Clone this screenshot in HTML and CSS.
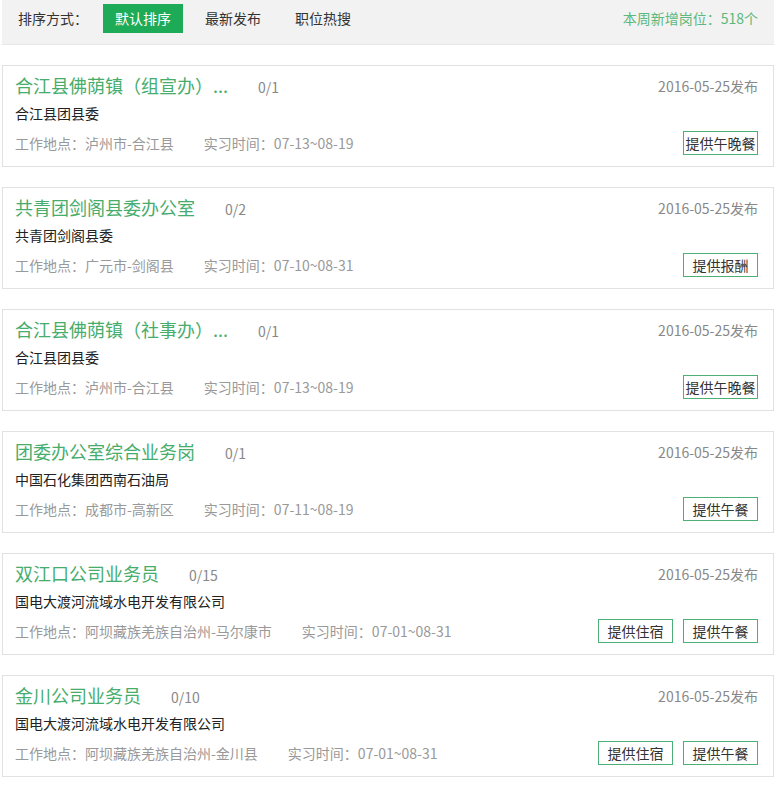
FILE: index.html
```html
<!doctype html>
<html lang="zh-CN">
<head>
    <meta charset="UTF-8">
    <meta name="viewport" content="width=device-width, initial-scale=1.0">
    <title>实习岗位</title>
    <link rel="stylesheet" href="styles.css">
</head>
<body>
    <div class="m-wrap">
        <div class="sort-bar">
            <div class="sort-left">
                <span class="sort-label">排序方式：</span>
                <a href="javascript:;" class="sort-item on">默认排序</a>
                <a href="javascript:;" class="sort-item">最新发布</a>
                <a href="javascript:;" class="sort-item">职位热搜</a>
            </div>
            <div class="sort-total">本周新增岗位：518个</div>
        </div>

        <div class="job">
            <div class="job-row job-head">
                <div class="job-title"><a href="javascript:;">合江县佛荫镇（组宣办）...</a><span class="job-count">0/1</span></div>
                <span class="job-date">2016-05-25发布</span>
            </div>
            <div class="job-org">合江县团县委</div>
            <div class="job-row job-meta">
                <div><span class="meta-place">工作地点：泸州市-合江县</span><span>实习时间：07-13~08-19</span></div>
                <div class="tags"><span class="tag">提供午晚餐</span></div>
            </div>
        </div>

        <div class="job">
            <div class="job-row job-head">
                <div class="job-title"><a href="javascript:;">共青团剑阁县委办公室</a><span class="job-count">0/2</span></div>
                <span class="job-date">2016-05-25发布</span>
            </div>
            <div class="job-org">共青团剑阁县委</div>
            <div class="job-row job-meta">
                <div><span class="meta-place">工作地点：广元市-剑阁县</span><span>实习时间：07-10~08-31</span></div>
                <div class="tags"><span class="tag">提供报酬</span></div>
            </div>
        </div>

        <div class="job">
            <div class="job-row job-head">
                <div class="job-title"><a href="javascript:;">合江县佛荫镇（社事办）...</a><span class="job-count">0/1</span></div>
                <span class="job-date">2016-05-25发布</span>
            </div>
            <div class="job-org">合江县团县委</div>
            <div class="job-row job-meta">
                <div><span class="meta-place">工作地点：泸州市-合江县</span><span>实习时间：07-13~08-19</span></div>
                <div class="tags"><span class="tag">提供午晚餐</span></div>
            </div>
        </div>

        <div class="job">
            <div class="job-row job-head">
                <div class="job-title"><a href="javascript:;">团委办公室综合业务岗</a><span class="job-count">0/1</span></div>
                <span class="job-date">2016-05-25发布</span>
            </div>
            <div class="job-org">中国石化集团西南石油局</div>
            <div class="job-row job-meta">
                <div><span class="meta-place">工作地点：成都市-高新区</span><span>实习时间：07-11~08-19</span></div>
                <div class="tags"><span class="tag">提供午餐</span></div>
            </div>
        </div>

        <div class="job">
            <div class="job-row job-head">
                <div class="job-title"><a href="javascript:;">双江口公司业务员</a><span class="job-count">0/15</span></div>
                <span class="job-date">2016-05-25发布</span>
            </div>
            <div class="job-org">国电大渡河流域水电开发有限公司</div>
            <div class="job-row job-meta">
                <div><span class="meta-place">工作地点：阿坝藏族羌族自治州-马尔康市</span><span>实习时间：07-01~08-31</span></div>
                <div class="tags"><span class="tag">提供住宿</span><span class="tag">提供午餐</span></div>
            </div>
        </div>

        <div class="job">
            <div class="job-row job-head">
                <div class="job-title"><a href="javascript:;">金川公司业务员</a><span class="job-count">0/10</span></div>
                <span class="job-date">2016-05-25发布</span>
            </div>
            <div class="job-org">国电大渡河流域水电开发有限公司</div>
            <div class="job-row job-meta">
                <div><span class="meta-place">工作地点：阿坝藏族羌族自治州-金川县</span><span>实习时间：07-01~08-31</span></div>
                <div class="tags"><span class="tag">提供住宿</span><span class="tag">提供午餐</span></div>
            </div>
        </div>
    </div>
</body>
</html>
```

FILE: styles.css
```css
*{
    margin: 0;
    padding: 0;
    box-sizing: border-box;
}
body{
    font-family: "Microsoft YaHei", "Noto Sans CJK SC", sans-serif;
    font-size: 14px;
    color: #333;
    background-color: #fff;
}
a{
    text-decoration: none;
}
.m-wrap{
    margin: 0 2px;
}
/* 排序栏 */
.sort-bar{
    height: 45px;
    background-color: #f2f2f2;
    border-bottom: 1px solid #e8e8e8;
    display: flex;
    justify-content: space-between;
    align-items: flex-start;
    padding: 4px 16px 0 16px;
}
.sort-left{
    display: flex;
    align-items: center;
}
.sort-label{
    line-height: 29px;
    margin-right: 15px;
}
.sort-item{
    display: block;
    height: 29px;
    line-height: 29px;
    padding: 0 12px;
    margin-right: 10px;
    color: #333;
}
.sort-item.on{
    background-color: #1dab57;
    color: #fff;
}
.sort-total{
    line-height: 29px;
    color: #5cb87c;
}
/* 岗位卡片 */
.job{
    margin-top: 20px;
    border: 1px solid #e2e2e2;
    padding: 6px 15px 8px 12px;
}
.job-row{
    display: flex;
    justify-content: space-between;
    align-items: center;
}
.job-head{
    height: 28px;
}
.job-title{
    display: flex;
    align-items: baseline;
    line-height: 24px;
}
.job-title a{
    font-size: 18px;
    color: #46ad6d;
}
.job-count{
    margin-left: 30px;
    color: #888;
}
.job-date{
    color: #888;
    line-height: 24px;
}
.job-org{
    height: 28px;
    line-height: 26px;
    color: #222;
}
.job-meta{
    height: 30px;
    color: #999;
}
.meta-place{
    margin-right: 30px;
}
.tags{
    display: flex;
    gap: 10px;
}
.tag{
    width: 75px;
    height: 24px;
    line-height: 22px;
    border: 1px solid #4caf76;
    color: #333;
    text-align: center;
}
```
